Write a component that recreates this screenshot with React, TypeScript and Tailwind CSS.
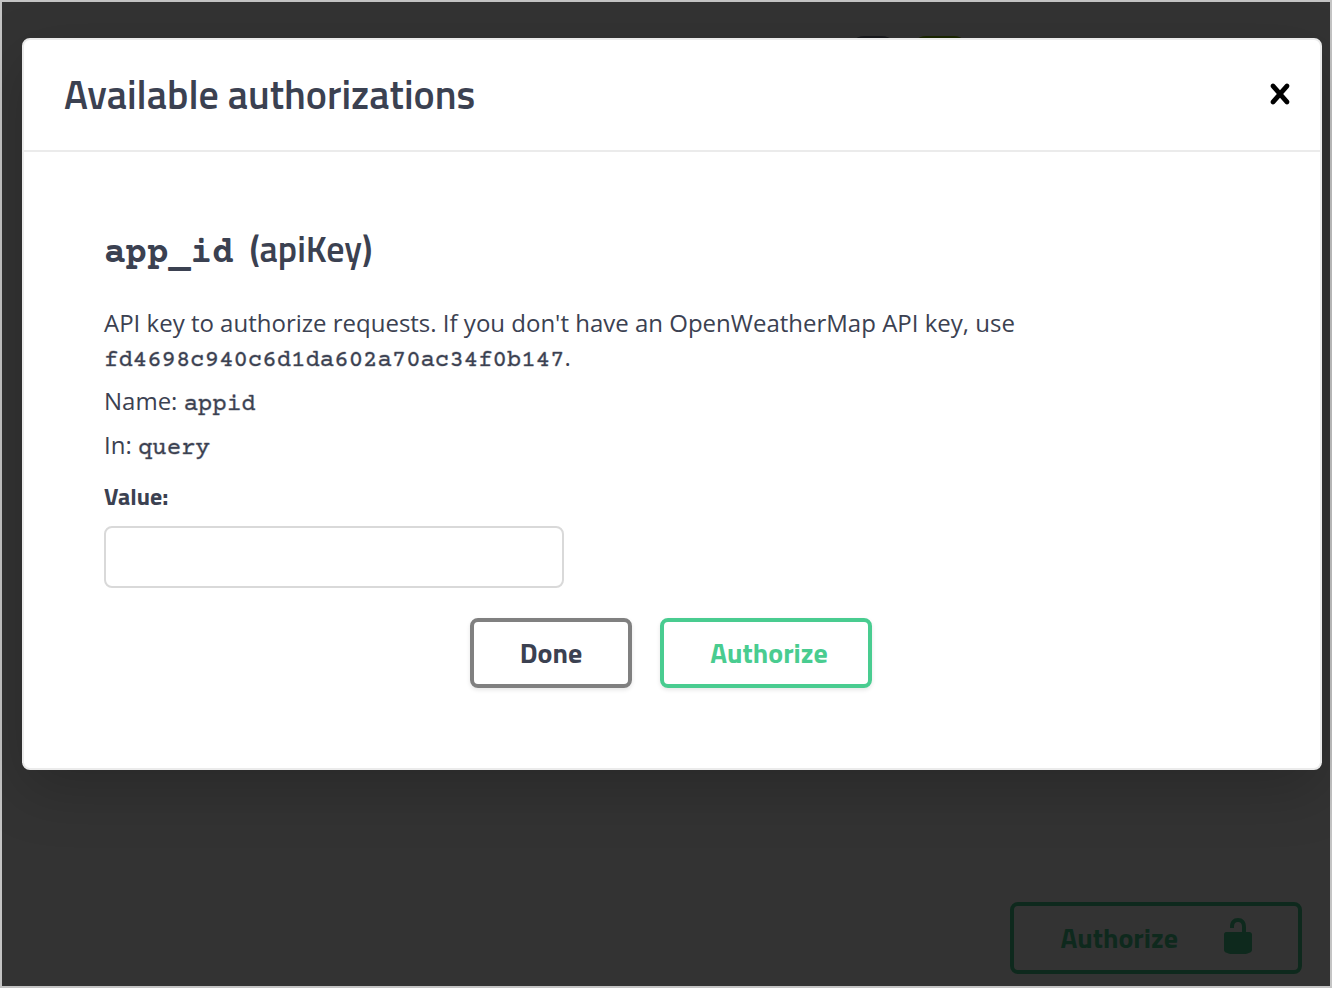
import React from "react";

const heading = "font-['Titillium_Web',Roboto,sans-serif]";
const mono = "leading-none font-['Courier_Prime','Nimbus_Mono_PS',FreeMono,'Liberation_Mono',monospace]";
const inlineCode = `${mono} [-webkit-text-stroke:1px_#3b415166]`;

function UnlockedIcon() {
  return (
    <svg viewBox="0 0 20 20" className="mb-1 size-10" fill="currentColor" aria-hidden="true">
      <path d="M15.8 8H14V5.6C14 2.703 12.665 1 10 1 7.334 1 6 2.703 6 5.6V6h2v-.801C8 3.754 8.797 3 10 3c1.203 0 2 .754 2 2.199V8H4c-.553 0-1 .646-1 1.199V17c0 .549.428 1.139.951 1.307l1.197.387C5.672 18.861 6.55 19 7.1 19h5.8c.549 0 1.428-.139 1.951-.307l1.196-.387c.524-.167.953-.757.953-1.306V9.199C17 8.646 16.352 8 15.8 8z" />
    </svg>
  );
}

function CloseIcon() {
  return (
    <svg viewBox="0 0 20 20" className="size-10" fill="currentColor" aria-hidden="true">
      <path d="M14.348 14.849c-.469.469-1.229.469-1.697 0L10 11.819l-2.651 3.029c-.469.469-1.229.469-1.697 0-.469-.469-.469-1.229 0-1.697l2.758-3.15-2.759-3.152c-.469-.469-.469-1.228 0-1.697.469-.469 1.228-.469 1.697 0L10 8.183l2.651-3.031c.469-.469 1.228-.469 1.697 0 .469.469.469 1.229 0 1.697l-2.758 3.152 2.758 3.15c.469.469.469 1.229 0 1.698z" />
    </svg>
  );
}

function PageBehind() {
  return (
    <div className="flex grow flex-col justify-between bg-white pt-[34px] pr-7 pb-3">
      <div className="flex gap-3 pl-[846px]">
        <span className="h-8 w-[50px] rounded-2xl bg-[#7d8492]" />
        <span className="h-8 w-[60px] rounded-2xl bg-[#89bf04]" />
      </div>
      <button
        type="button"
        className={`${heading} flex h-18 items-center gap-10 self-end rounded-lg border-4 border-[#49cc90] pr-10 pl-[46px] text-[28px] font-bold text-[#49cc90]`}
      >
        Authorize
        <UnlockedIcon />
      </button>
    </div>
  );
}

function AuthDialog() {
  return (
    <div
      role="dialog"
      aria-modal="true"
      aria-labelledby="auth-title"
      className="absolute top-9 right-2 left-5 rounded-lg border-2 border-[#ebebeb] bg-white text-[#3b4151] shadow-[0_20px_60px_0_rgba(0,0,0,0.2)]"
    >
      <header className="flex h-28 items-center justify-between border-b-2 border-[#ebebeb] pr-5 pl-10">
        <h2 id="auth-title" className={`${heading} text-[40px] leading-none font-semibold`}>
          Available authorizations
        </h2>
        <button type="button" aria-label="Close" className="mb-0.5 text-black">
          <CloseIcon />
        </button>
      </header>
      <form className="p-20 font-['Open_Sans',sans-serif] text-2xl" onSubmit={(e) => e.preventDefault()}>
        <h3 className={`${heading} text-4xl leading-[34px] font-semibold`}>
          <code className={`${mono} font-bold`}>app_id</code>
          <span className="ml-4">(apiKey)</span>
        </h3>
        <p className="mt-[34px] leading-[34px]">
          API key to authorize requests. If you don't have an OpenWeatherMap API key, use
          <br />
          <code className={inlineCode}>fd4698c940c6d1da602a70ac34f0b147</code>.
        </p>
        <p className="mt-2.5 leading-[34px]">
          Name: <code className={inlineCode}>appid</code>
        </p>
        <p className="mt-2.5 leading-[34px]">
          In: <code className={inlineCode}>query</code>
        </p>
        <label htmlFor="api-key-value" className={`${heading} mt-4 block leading-9 font-bold`}>
          Value:
        </label>
        <input
          id="api-key-value"
          type="text"
          className="mt-3 block h-[62px] w-full max-w-[460px] rounded-lg border-2 border-[#d9d9d9] bg-white px-5"
        />
        <div className={`${heading} mt-[30px] flex justify-center gap-7 pr-0.5 text-[28px] font-bold`}>
          <button
            type="button"
            className="h-[70px] w-[162px] rounded-lg border-4 border-[#808080] shadow-[0_2px_4px_rgba(0,0,0,0.1)]"
          >
            Done
          </button>
          <button
            type="submit"
            className="h-[70px] w-[212px] rounded-lg border-4 border-[#49cc90] pl-1.5 text-[#49cc90] shadow-[0_2px_4px_rgba(0,0,0,0.1)]"
          >
            Authorize
          </button>
        </div>
      </form>
    </div>
  );
}

export default function App() {
  return (
    <main className="relative flex min-h-screen flex-col border-2 border-[#c4c4c4]">
      <PageBehind />
      <div className="absolute inset-0 bg-black/80">
        <AuthDialog />
      </div>
    </main>
  );
}
